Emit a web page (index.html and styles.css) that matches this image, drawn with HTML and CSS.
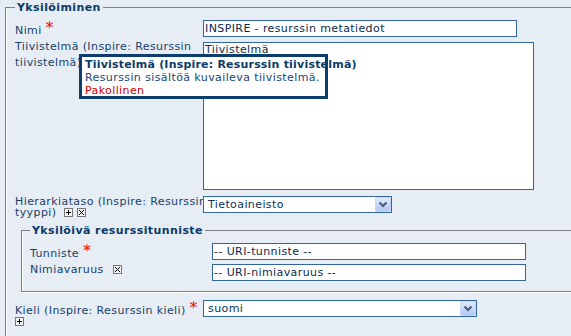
FILE: index.html
```html
<!DOCTYPE html>
<html lang="fi">
<head>
<meta charset="utf-8">
<title>Yksilöiminen</title>
<link rel="stylesheet" href="styles.css">
</head>
<body>
<fieldset class="fs outer">
  <legend class="lg">Yksilöiminen</legend>

  <div class="row r-nimi">
    <div class="lbl req">Nimi <span class="ast">*</span></div>
    <input class="txt" type="text" value="INSPIRE - resurssin metatiedot">
  </div>

  <div class="row r-tiiv">
    <div class="lbl tall">Tiivistelmä (Inspire: Resurssin<br>tiivistelmä)</div>
    <textarea class="area">Tiivistelmä</textarea>
    <div class="tip">
      <div class="tip-t">Tiivistelmä (Inspire: Resurssin tiivistelmä)</div>
      <div class="tip-d">Resurssin sisältöä kuvaileva tiivistelmä.</div>
      <div class="tip-r">Pakollinen</div>
    </div>
  </div>

  <div class="row r-hier">
    <div class="lbl">Hierarkiataso (Inspire: Resurssin<br>tyyppi)<svg class="ico ml8" viewBox="0 0 9 9"><rect x=".5" y=".5" width="8" height="8" fill="#f4f4f4" stroke="#777"/><path d="M2 4h5v1H2zM4 2h1v5H4z" fill="#000"/></svg><svg class="ico ml4" viewBox="0 0 9 9"><rect x=".5" y=".5" width="8" height="8" fill="#f4f4f4" stroke="#777"/><path d="M2 2h1v1H2zM3 3h1v1H3zM4 4h1v1H4zM5 5h1v1H5zM6 6h1v1H6zM6 2h1v1H6zM5 3h1v1H5zM3 5h1v1H3zM2 6h1v1H2z" fill="#000"/></svg></div>
    <div class="sel w189">
      <span class="sel-v">Tietoaineisto</span>
      <span class="sel-b"><svg class="chev" viewBox="0 0 14 13"><polyline points="3.5,4.5 7,8 10.5,4.5" fill="none" stroke="#4b5d84" stroke-width="2.2"/></svg></span>
    </div>
  </div>

  <fieldset class="fs inner">
    <legend class="lg">Yksilöivä resurssitunniste</legend>
    <div class="row r-tun">
      <div class="lbl req">Tunniste <span class="ast">*</span></div>
      <input class="txt" type="text" value="-- URI-tunniste --">
    </div>
    <div class="row">
      <div class="lbl">Nimiavaruus<svg class="ico ml9" viewBox="0 0 9 9"><rect x=".5" y=".5" width="8" height="8" fill="#f4f4f4" stroke="#777"/><path d="M2 2h1v1H2zM3 3h1v1H3zM4 4h1v1H4zM5 5h1v1H5zM6 6h1v1H6zM6 2h1v1H6zM5 3h1v1H5zM3 5h1v1H3zM2 6h1v1H2z" fill="#000"/></svg></div>
      <input class="txt" type="text" value="-- URI-nimiavaruus --">
    </div>
  </fieldset>

  <div class="row r-kieli">
    <div class="lbl req">Kieli (Inspire: Resurssin kieli) <span class="ast">*</span><br><svg class="ico" viewBox="0 0 9 9"><rect x=".5" y=".5" width="8" height="8" fill="#f4f4f4" stroke="#777"/><path d="M2 4h5v1H2zM4 2h1v5H4z" fill="#000"/></svg></div>
    <div class="sel w274">
      <span class="sel-v">suomi</span>
      <span class="sel-b"><svg class="chev" viewBox="0 0 14 13"><polyline points="3.5,4.5 7,8 10.5,4.5" fill="none" stroke="#4b5d84" stroke-width="2.2"/></svg></span>
    </div>
  </div>
</fieldset>
</body>
</html>
```

FILE: styles.css
```css
html, body {
  margin: 0;
  padding: 0;
  overflow: hidden;
}
body {
  width: 571px;
  height: 336px;
  background: #e6edf5;
  font-family: "DejaVu Sans", Verdana, sans-serif;
  font-size: 11px;
  line-height: 11px;
  letter-spacing: 0.4px;
  color: #173f6a;
}
.fs {
  margin: 0;
  min-width: 0;
  border: 1px solid #808080;
  box-shadow: inset 1px 0 0 #fff, 0 1px 0 #fff;
}
.outer {
  margin-left: 5px;
  width: 600px;
  box-sizing: border-box;
  padding: 6px 0 20px 9px;
}
.inner {
  margin: 5px 0 8px 6px;
  padding: 6px 0 10px 8px;
}
.lg {
  font-weight: bold;
  color: #0d3a66;
  padding: 2px 2px 0;
  line-height: 12px;
}
.row {
  display: flex;
  align-items: flex-start;
}
.r-nimi { margin-bottom: 5px; }
.r-tiiv { margin-bottom: 6px; position: relative; }
.r-tun { margin-bottom: 4px; }

.lbl {
  flex: none;
  width: 188px;
  line-height: 11px;
  white-space: nowrap;
}
.inner .lbl { width: 182px; }
.req { padding-top: 5px; }
.tall { line-height: 16px; margin-top: -3px; }
.ast {
  color: #f00;
  font-size: 16px;
  line-height: 0;
  letter-spacing: 0;
  vertical-align: 1px;
}
.ico {
  width: 9px;
  height: 9px;
  vertical-align: -1px;
}
.ml4 { margin-left: 4px; }
.ml8 { margin-left: 8px; }
.ml9 { margin-left: 9px; }

.txt {
  width: 314px;
  height: 17px;
  box-sizing: border-box;
  margin: 0;
  padding: 0 1px;
  border: 1px solid #336699;
  background: #fff;
  color: #0c2b4d;
  font: inherit;
  letter-spacing: inherit;
  line-height: normal;
  outline: none;
}
.area {
  width: 331px;
  height: 148px;
  box-sizing: border-box;
  margin: 0;
  padding: 0 1px;
  border: 1px solid #336699;
  background: #fff;
  color: #0c2b4d;
  font: inherit;
  letter-spacing: inherit;
  line-height: normal;
  resize: none;
  overflow: hidden;
  outline: none;
}
.tip {
  position: absolute;
  left: 64px;
  top: 12px;
  width: 249px;
  height: 45px;
  box-sizing: border-box;
  border: 3px solid #0c3d6d;
  background: #fff;
  padding: 1px 3px 0;
  line-height: 13px;
  white-space: nowrap;
}
.tip-t { font-weight: bold; color: #0d3a66; letter-spacing: 0.2px; }
.tip-d { color: #1a4674; }
.tip-r { color: #cc0000; }

.sel {
  display: flex;
  align-items: stretch;
  height: 17px;
  box-sizing: border-box;
  border: 1px solid #336699;
  background: #fff;
  color: #0d3359;
}
.w189 { width: 189px; }
.w274 { width: 274px; }
.sel-v {
  flex: 1;
  padding-left: 4px;
  line-height: 15px;
}
.sel-b {
  flex: none;
  width: 16px;
  box-sizing: border-box;
  border: 1px solid #c6d6f5;
  border-radius: 2px;
  background: linear-gradient(#e0eafc, #b3c8f1);
  display: flex;
  align-items: center;
  justify-content: center;
}
.chev {
  width: 14px;
  height: 13px;
}
```
